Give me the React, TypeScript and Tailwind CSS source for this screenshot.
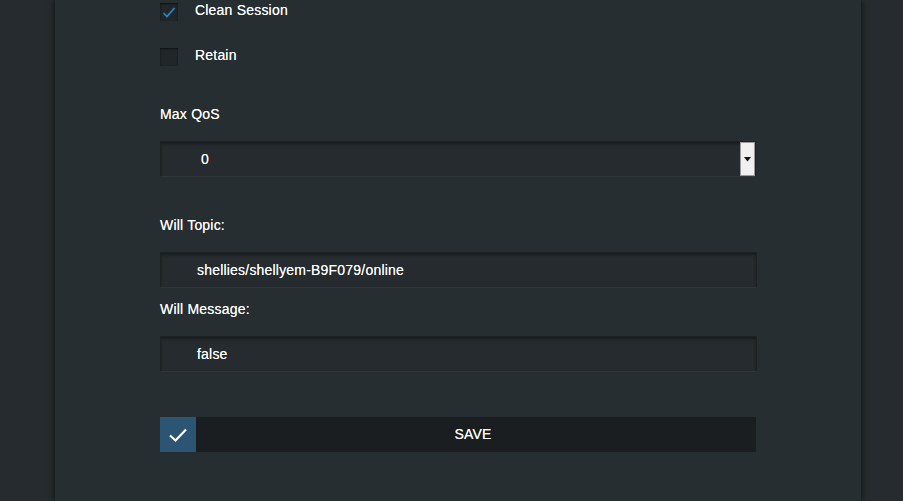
import React from 'react';

const font = { fontFamily: '"Liberation Sans", Arial, sans-serif' };
const txt = 'text-[14px] tracking-[0.2px] text-white [text-shadow:0_0_0.6px_rgba(255,255,255,0.8)]';

const Checkbox = ({ checked, label }: { checked?: boolean; label: string }) => (
  <div className="flex items-center h-[18px]">
    <div className="w-[18px] h-[18px] bg-[#212628] shadow-[inset_0_1px_2px_rgba(0,0,0,0.6)] flex items-center justify-center">
      {checked && (
        <svg width="14" height="12" viewBox="0 0 14 12">
          <path d="M1.5 7 L5 10.5 L12.5 2" fill="none" stroke="#2b86d0" strokeWidth="1.7" />
        </svg>
      )}
    </div>
    <span className={`ml-[17px] leading-none -mt-[4px] ${txt}`}>{label}</span>
  </div>
);

const TextField = ({ value }: { value: string }) => (
  <div className={`h-[36px] w-[597px] bg-[#252b2e] border border-[#1d2123] border-b-[#30373a] shadow-[inset_0_2px_3px_rgba(0,0,0,0.35)] flex items-center pl-[36px] ${txt}`}>
    {value}
  </div>
);

export default function App() {
  return (
    <div className="w-full h-[501px] bg-[#252b2e] overflow-hidden flex" style={font}>
      <div className="ml-[55px] w-[806px] h-full bg-[#272e31] shadow-[0_0_6px_rgba(0,0,0,0.7)] pl-[105px] pt-[3px] flex flex-col">
        <Checkbox checked label="Clean Session" />
        <div className="h-[27px]" />
        <Checkbox label="Retain" />

        <div className={`mt-[38px] h-[20px] flex items-center ${txt}`}>Max QoS</div>

        <div className="mt-[17px] h-[36px] w-[596px] flex bg-[#252b2e] border border-[#1d2123] border-b-[#30373a] shadow-[inset_0_2px_3px_rgba(0,0,0,0.35)]">
          <div className={`flex-1 flex items-center pl-[40px] ${txt}`}>0</div>
          <div className="w-[15px] bg-[#f0f0f0] border border-[#9a9a9a] flex items-center justify-center">
            <svg width="7" height="5" viewBox="0 0 7 5">
              <path d="M0 0 H7 L3.5 4.5 Z" fill="#111" />
            </svg>
          </div>
        </div>

        <div className={`mt-[38px] h-[20px] flex items-center ${txt}`}>Will Topic:</div>
        <div className="mt-[17px]">
          <TextField value="shellies/shellyem-B9F079/online" />
        </div>

        <div className={`mt-[11px] h-[20px] flex items-center ${txt}`}>Will Message:</div>
        <div className="mt-[17px]">
          <TextField value="false" />
        </div>

        <div className="mt-[45px] h-[35px] w-[596px] flex">
          <div className="w-[36px] h-full bg-[#2c5574] flex items-center justify-center">
            <svg width="20" height="16" viewBox="0 0 20 16">
              <path d="M2 8.5 L7.5 13.5 L18 2.5" fill="none" stroke="#fff" strokeWidth="2.2" />
            </svg>
          </div>
          <div className={`flex-1 h-full bg-[#1a1e20] flex items-center justify-center pr-[6px] ${txt}`}>
            SAVE
          </div>
        </div>
      </div>
    </div>
  );
}
